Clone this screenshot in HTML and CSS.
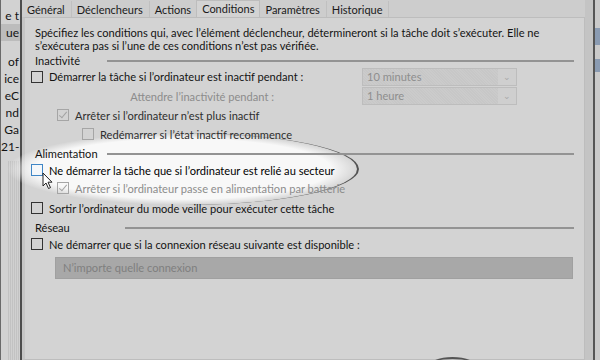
FILE: index.html
```html
<!DOCTYPE html>
<html lang="fr">
<head>
    <meta charset="UTF-8">
    <title>Conditions</title>
    <link rel="stylesheet" href="styles.css">
</head>
<body>
    <div class="side-left">
        <div class="frag">e t</div>
        <div class="frag sel">ue</div>
        <div class="frag gap">of</div>
        <div class="frag">ice</div>
        <div class="frag">eC</div>
        <div class="frag">nd</div>
        <div class="frag">Ga</div>
        <div class="frag">21-</div>
        <div class="hatch"></div>
    </div>

    <div class="dialog">
        <div class="tabs">
            <div class="tab">Général</div>
            <div class="tab">Déclencheurs</div>
            <div class="tab">Actions</div>
            <div class="tab active">Conditions</div>
            <div class="tab">Paramètres</div>
            <div class="tab">Historique</div>
        </div>

        <div class="panel">
            <div class="content">
                <p class="intro">Spécifiez les conditions qui, avec l’élément déclencheur, détermineront si la tâche doit s’exécuter. Elle ne s’exécutera pas si l’une de ces conditions n’est pas vérifiée.</p>

                <div class="group">
                    <span class="group-title">Inactivité</span>
                    <span class="rule"></span>
                </div>
                <div class="row r-idle">
                    <span class="box"></span>
                    <span class="label">Démarrer la tâche si l’ordinateur est inactif pendant :</span>
                    <div class="combo"><span class="combo-val">10 minutes</span><span class="chev">&#8964;</span></div>
                </div>
                <div class="row r-wait">
                    <span class="label muted wait">Attendre l’inactivité pendant :</span>
                    <div class="combo"><span class="combo-val">1 heure</span><span class="chev">&#8964;</span></div>
                </div>
                <div class="row r-stop lvl1">
                    <span class="box checked off"></span>
                    <span class="label soft">Arrêter si l’ordinateur n’est plus inactif</span>
                </div>
                <div class="row r-restart lvl2">
                    <span class="box off"></span>
                    <span class="label soft">Redémarrer si l’état inactif recommence</span>
                </div>

                <div class="group g-power">
                    <span class="group-title">Alimentation</span>
                    <span class="rule"></span>
                </div>
                <div class="row r-ac">
                    <span class="box hover"></span>
                    <span class="label strong">Ne démarrer la tâche que si l’ordinateur est relié au secteur</span>
                </div>
                <div class="row r-batt lvl1">
                    <span class="box checked off"></span>
                    <span class="label muted">Arrêter si l’ordinateur passe en alimentation par batterie</span>
                </div>
                <div class="row r-wake">
                    <span class="box"></span>
                    <span class="label">Sortir l’ordinateur du mode veille pour exécuter cette tâche</span>
                </div>

                <div class="group g-net">
                    <span class="group-title">Réseau</span>
                    <span class="rule"></span>
                </div>
                <div class="row r-net">
                    <span class="box"></span>
                    <span class="label">Ne démarrer que si la connexion réseau suivante est disponible :</span>
                </div>
                <div class="combo wide"><span class="combo-val">N’importe quelle connexion</span><span class="chev">&#8964;</span></div>
            </div>
        </div>
    </div>

    <div class="side-right">
        <div class="blue b1"></div>
        <div class="blue b2"></div>
    </div>

    <!-- spotlight and pointer laid over the dimmed screenshot -->
    <div class="spot"></div>
    <svg class="cursor" width="12" height="18" viewBox="0 0 12 18">
        <path d="M1 1 L1 14 L4 11 L6.5 16.5 L8.5 15.6 L6 10.2 L10 10.2 Z" fill="#fff" stroke="#222" stroke-width="1"/>
    </svg>
    <div class="ring"></div>
</body>
</html>
```

FILE: styles.css
```css
* {
    box-sizing: border-box;
}

body {
    margin: 0;
    width: 600px;
    height: 360px;
    overflow: hidden;
    position: relative;
    display: flex;
    background-color: #cdcdcd;
    font-family: Lato, "Open Sans", sans-serif;
    font-size: 11.1px;
    color: #131313;
}

/* window behind, on the left */
.side-left {
    width: 22px;
    flex-shrink: 0;
    background-color: #d2d2d2;
    border-left: 1px solid #6a6a6a;
    border-right: 2px solid #4d4d4d;
    display: flex;
    flex-direction: column;
    padding-top: 7px;
}

.frag {
    height: 17px;
    line-height: 17px;
    text-align: right;
    white-space: nowrap;
    overflow: hidden;
    padding-right: 1px;
    font-size: 12px;
}

.frag.sel {
    background-color: #bcbcbc;
}

.frag.gap {
    margin-top: 12px;
}

.hatch {
    flex: 1;
    margin: 6px 0 0 7px;
    background: repeating-linear-gradient(90deg, #c2c2c2 0 1px, #d0d0d0 1px 2px);
}

/* dialog */
.dialog {
    width: 563px;
    flex-shrink: 0;
    display: flex;
    flex-direction: column;
}

.tabs {
    display: flex;
    height: 17px;
    padding-left: 0;
    align-items: flex-end;
}

.tab {
    height: 16px;
    line-height: 17px;
    padding: 0 6px 0 5px;
    border-right: 1px solid #c0c0c0;
    font-size: 11px;
    color: #1a1a1a;
}

.tab.active {
    height: 18px;
    line-height: 15px;
    background-color: #d3d3d3;
    border: 1px solid #bdbdbd;
    border-bottom: none;
    padding: 0 5px;
    margin: 0 0 -1px -2px;
}

.panel {
    flex: 1;
    background-color: #d3d3d3;
    border: 1px solid #bdbdbd;
    border-left: 3px solid #c6c6c6;
    padding: 9px 10px 0 6px;
}

.content {
    position: relative;
    z-index: 2;
}

.intro {
    margin: 0 0 0 4px;
    line-height: 12.5px;
    height: 26px;
}

.group {
    display: flex;
    align-items: center;
    height: 14px;
    padding-left: 4px;
}

.group-title {
    width: 72px;
}

.g-net .group-title {
    width: 90px;
}

.rule {
    flex: 1;
    height: 2px;
    background-color: #939393;
    margin-top: 1px;
}

.g-power {
    height: 18px;
}

.g-net {
    height: 18px;
}

.row {
    display: flex;
    align-items: center;
    height: 19px;
}

.r-wait {
    height: 20px;
}

.r-stop {
    height: 18px;
}

.r-restart {
    height: 20px;
}

.r-ac {
    height: 16px;
}

.r-batt {
    height: 20px;
}

.r-wake {
    height: 20px;
}

.r-net {
    height: 16px;
}

.lvl1 {
    padding-left: 26px;
}

.lvl2 {
    padding-left: 51px;
}

.box {
    width: 12px;
    height: 12px;
    border: 1px solid #333;
    margin-right: 6px;
    flex-shrink: 0;
    position: relative;
}

.box.off {
    border-color: #a5a5a5;
}

.box.hover {
    border-color: #3f86c6;
    background-color: #f4f7fa;
}

.box.checked::after {
    content: "";
    position: absolute;
    left: 3px;
    top: 0;
    width: 3px;
    height: 7px;
    border: solid #a3a3a3;
    border-width: 0 1px 1px 0;
    transform: rotate(40deg);
}

.label {
    white-space: nowrap;
}

.muted {
    color: #8c8c8c;
}

.soft {
    color: #2e2e2e;
}

.strong {
    color: #000;
}

.wait {
    width: 243px;
    text-align: right;
}

.combo {
    margin-left: auto;
    margin-right: 57px;
    width: 155px;
    height: 18px;
    border: 1px solid #bdbdbd;
    background-color: #cfcfcf;
    display: flex;
    align-items: center;
    color: #8e8e8e;
}

.combo-val {
    flex: 1;
    height: 100%;
    line-height: 16px;
    padding-left: 4px;
    background: repeating-linear-gradient(45deg, #c7c7c7 0 1px, #cbcbcb 1px 2px);
}

.chev {
    width: 18px;
    text-align: center;
    font-size: 9px;
    line-height: 10px;
    color: #a9a9a9;
}

.combo.wide {
    width: 518px;
    height: 22px;
    margin: 5px 0 0 24px;
    background-color: #a8a8a8;
    border-color: #a0a0a0;
    color: #7f7f7f;
}

.combo.wide .combo-val {
    line-height: 20px;
    padding-left: 7px;
    background: none;
}

/* window behind, on the right */
.side-right {
    flex: 1;
    position: relative;
    background: linear-gradient(90deg, #c4c4c4 0 8px, #555 8px 10px, #cacaca 10px);
}

.blue {
    position: absolute;
    right: 0;
    width: 5px;
    background-color: #8a9bb2;
}

.b1 {
    top: 28px;
    height: 17px;
}

.b2 {
    top: 59px;
    height: 13px;
}

/* spotlight */
.spot {
    position: absolute;
    left: 7px;
    top: 133px;
    width: 352px;
    height: 72px;
    border-radius: 50%;
    z-index: 1;
    background: radial-gradient(closest-side, #f8f8f8 84%, rgba(248, 248, 248, 0) 100%);
}

.spot::after {
    content: "";
    position: absolute;
    inset: 0;
    border-radius: 50%;
    border-right: 2px solid rgba(60, 60, 60, 0.85);
    filter: blur(0.5px);
}

.cursor {
    position: absolute;
    left: 42px;
    top: 172px;
    z-index: 3;
}

.ring {
    position: absolute;
    left: 428px;
    top: 357px;
    width: 49px;
    height: 20px;
    border-top: 2px solid #555;
    border-radius: 50%;
}
```
